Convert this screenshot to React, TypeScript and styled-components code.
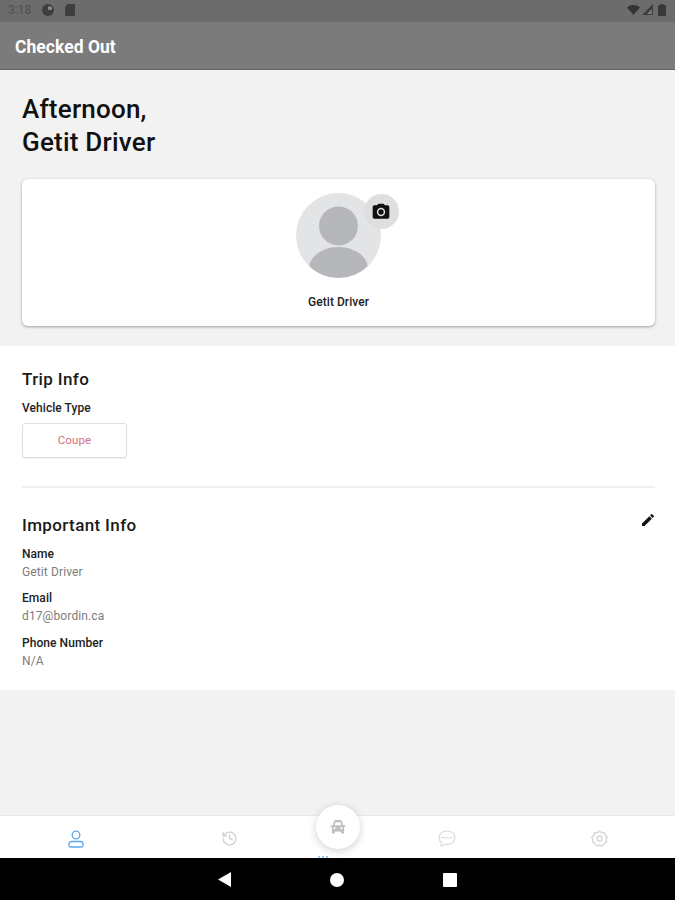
import React from "react";
import styled, { createGlobalStyle } from "styled-components";

const Global = createGlobalStyle`
  html, body { margin: 0; padding: 0; background: #f2f2f2; }
  body { font-family: Roboto, "Liberation Sans", sans-serif; }
`;

const Screen = styled.div`
  position: relative;
  width: 675px;
  height: 900px;
  display: flex;
  flex-direction: column;
  overflow: hidden;
  background: #f2f2f2;
`;

const StatusBar = styled.div`
  height: 22px;
  background: #6c6c6c;
  display: flex;
  align-items: center;
  padding: 0 9px 3px 8px;
  box-sizing: border-box;
  gap: 9px;
`;

const StatusTime = styled.span`
  font-size: 12px;
  color: #4e4e4e;
  width: 24px;
`;

const StatusRight = styled.div`
  margin-left: auto;
  display: flex;
  align-items: center;
  gap: 2px;
`;

const AppBar = styled.header`
  height: 48px;
  background: #7b7b7b;
  border-bottom: 1px solid #626262;
  display: flex;
  align-items: center;
  padding: 3px 15px 0;
  box-sizing: border-box;
  color: #fff;
  font-size: 17.5px;
  font-weight: 700;
  letter-spacing: 0.03px;
  flex: none;
`;

const Hero = styled.section`
  height: 276px;
  flex: none;
  padding: 23px 20px 0 22px;
  box-sizing: border-box;
`;

const Greeting = styled.h1`
  margin: 0;
  font-size: 26px;
  line-height: 33px;
  font-weight: 500;
  letter-spacing: 0.22px;
  color: #111;
`;

const ProfileCard = styled.div`
  margin-top: 20px;
  height: 147px;
  background: #fff;
  border-radius: 6px;
  box-shadow: 0 1px 3px rgba(0, 0, 0, 0.35);
  display: flex;
  flex-direction: column;
  align-items: center;
  padding-top: 14px;
  box-sizing: border-box;
`;

const AvatarWrap = styled.div`
  position: relative;
  width: 85px;
  height: 85px;
  margin-left: -1px;
`;

const CameraBadge = styled.div`
  position: absolute;
  left: 68px;
  top: 1px;
  width: 35px;
  height: 35px;
  border-radius: 50%;
  background: #dedfe0;
  display: flex;
  align-items: center;
  justify-content: center;
`;

const ProfileName = styled.div`
  margin-top: 17px;
  font-size: 12px;
  font-weight: 500;
  letter-spacing: 0.05px;
  color: #222;
`;

const InfoPanel = styled.section`
  height: 344px;
  flex: none;
  background: #fff;
  padding: 23px 20px 0 22px;
  box-sizing: border-box;
`;

const SectionHead = styled.div`
  display: flex;
  justify-content: space-between;
  align-items: flex-start;
`;

const SectionTitle = styled.h2`
  margin: 0;
  font-size: 17px;
  line-height: 20px;
  font-weight: 500;
  letter-spacing: 0.37px;
  color: #1a1a1a;
`;

const FieldLabel = styled.div`
  font-size: 12px;
  line-height: 15px;
  font-weight: 500;
  letter-spacing: 0.06px;
  color: #222;
`;

const FieldValue = styled.div`
  font-size: 12px;
  line-height: 15px;
  letter-spacing: 0.12px;
  color: #7d7d7d;
  margin-top: 3px;
`;

const TripLabel = styled(FieldLabel)`
  margin-top: 12px;
`;

const TypeChip = styled.div`
  margin-top: 7px;
  width: 105px;
  height: 35px;
  background: #fff;
  border: 1px solid #dedede;
  border-radius: 3px;
  box-shadow: 0 1px 1px rgba(0, 0, 0, 0.06);
  box-sizing: border-box;
  display: flex;
  align-items: center;
  justify-content: center;
  padding-bottom: 2px;
  font-size: 11.5px;
  letter-spacing: 0.1px;
  color: #d4707f;
`;

const Divider = styled.hr`
  margin: 28px 0 0;
  border: 0;
  border-top: 2px solid #f0f0f0;
`;

const ImportantHead = styled(SectionHead)`
  margin-top: 27px;
`;

const EditIcon = styled.svg`
  margin: -3px -1px 0 0;
`;

const Field = styled.div`
  margin-top: 11.5px;
`;

const Spacer = styled.div`
  flex: 1;
`;

const BottomNav = styled.nav`
  height: 43px;
  flex: none;
  background: #fff;
  border-top: 1px solid #e8e8e8;
  box-sizing: border-box;
  display: grid;
  grid-template-columns: 152px 154px 65px 152px 152px;
`;

const NavCell = styled.div`
  display: flex;
  align-items: center;
  justify-content: center;
  padding-top: 3px;
`;

const FloatingButton = styled.div`
  position: absolute;
  left: 316px;
  top: 805px;
  width: 44px;
  height: 44px;
  border-radius: 50%;
  background: #fff;
  box-shadow: 0 2px 8px rgba(0, 0, 0, 0.18);
  display: flex;
  align-items: center;
  justify-content: center;
`;

const ActiveDots = styled.div`
  position: absolute;
  left: 318px;
  top: 856px;
  width: 10px;
  height: 2px;
  background: repeating-linear-gradient(90deg, #9cc8ef 0 2px, transparent 2px 4px);
`;

const SystemBar = styled.div`
  height: 42px;
  flex: none;
  background: #000;
  display: flex;
  justify-content: center;
  align-items: center;
  gap: 99px;
  padding: 1px 1px 0 0;
  box-sizing: border-box;
`;

export default function App() {
  return (
    <Screen>
      <Global />
      <StatusBar>
        <StatusTime>3:18</StatusTime>
        <svg width="14" height="14" viewBox="0 0 14 14">
          <circle cx="7" cy="7" r="6" fill="#3e3e3e" />
          <path d="M7 3.500h2.500a1.700 1.700 0 0 1 0 3.600H7z" fill="#8a8a8a" />
        </svg>
        <svg width="12" height="13" viewBox="0 0 12 13">
          <path d="M3.500 1H10a1 1 0 0 1 1 1v10a1 1 0 0 1-1 1H2a1 1 0 0 1-1-1V4z" fill="#3e3e3e" />
        </svg>
        <StatusRight>
          <svg width="13" height="10" viewBox="0 0 13 10">
            <path d="M0 2.500C3.500-.8 9.500-.8 13 2.500L6.500 10z" fill="#333" />
          </svg>
          <svg width="11" height="11" viewBox="0 0 11 11">
            <path d="M11 0v11H0z" fill="#3c3c3c" />
            <path d="M10 5v5H5z" fill="#7c7c7c" />
          </svg>
          <svg width="8" height="12" viewBox="0 0 8 12" style={{ marginLeft: 3 }}>
            <path d="M2.500 0h3v1H7a1 1 0 0 1 1 1v9a1 1 0 0 1-1 1H1a1 1 0 0 1-1-1V2a1 1 0 0 1 1-1h1.500z" fill="#383838" />
          </svg>
        </StatusRight>
      </StatusBar>
      <AppBar>Checked Out</AppBar>
      <Hero>
        <Greeting>
          Afternoon,
          <br />
          Getit Driver
        </Greeting>
        <ProfileCard>
          <AvatarWrap>
            <svg width="85" height="85" viewBox="0 0 85 85">
              <defs>
                <clipPath id="avatar-clip">
                  <circle cx="42.500" cy="42.500" r="42.500" />
                </clipPath>
              </defs>
              <circle cx="42.500" cy="42.500" r="42.500" fill="#e3e4e6" />
              <g clipPath="url(#avatar-clip)" fill="#b6b7ba">
                <circle cx="42.500" cy="33" r="19.500" />
                <path d="M13 85 V76 C13 63 27 54 42.500 54 C58 54 72 63 72 76 V85 Z" />
              </g>
            </svg>
            <CameraBadge>
              <svg width="20" height="20" viewBox="0 0 24 24" fill="#111">
                <path d="M9 2 7.170 4H4a2 2 0 0 0-2 2v12a2 2 0 0 0 2 2h16a2 2 0 0 0 2-2V6a2 2 0 0 0-2-2h-3.170L15 2H9zm3 15a5 5 0 1 1 0-10 5 5 0 0 1 0 10z" />
                <circle cx="12" cy="12" r="3.200" />
              </svg>
            </CameraBadge>
          </AvatarWrap>
          <ProfileName>Getit Driver</ProfileName>
        </ProfileCard>
      </Hero>
      <InfoPanel>
        <SectionTitle>Trip Info</SectionTitle>
        <TripLabel>Vehicle Type</TripLabel>
        <TypeChip>Coupe</TypeChip>
        <Divider />
        <ImportantHead>
          <SectionTitle>Important Info</SectionTitle>
          <EditIcon width="16" height="16" viewBox="0 0 24 24" fill="#111">
            <path d="M3 17.250V21h3.750L17.810 9.940l-3.750-3.750L3 17.250zM20.710 7.040a1 1 0 0 0 0-1.410l-2.340-2.340a1 1 0 0 0-1.410 0l-1.830 1.830 3.750 3.750 1.830-1.830z" />
          </EditIcon>
        </ImportantHead>
        <Field>
          <FieldLabel>Name</FieldLabel>
          <FieldValue>Getit Driver</FieldValue>
        </Field>
        <Field>
          <FieldLabel>Email</FieldLabel>
          <FieldValue>d17@bordin.ca</FieldValue>
        </Field>
        <Field>
          <FieldLabel>Phone Number</FieldLabel>
          <FieldValue>N/A</FieldValue>
        </Field>
      </InfoPanel>
      <Spacer />
      <BottomNav>
        <NavCell>
          <svg width="16" height="18" viewBox="0 0 16 18" fill="none" stroke="#5ba8ef" strokeWidth="1.300">
            <circle cx="8" cy="5" r="3.800" />
            <path d="M1 15.500v-1.500a2.500 2.500 0 0 1 2.500-2.500h9a2.500 2.500 0 0 1 2.500 2.500v1.500a1.500 1.500 0 0 1-1.500 1.500h-11a1.500 1.500 0 0 1-1.500-1.500z" />
          </svg>
        </NavCell>
        <NavCell>
          <svg width="17" height="17" viewBox="0 0 24 24" fill="none" stroke="#d2d2d2" strokeWidth="2" strokeLinecap="round" strokeLinejoin="round">
            <path d="M3 12a9 9 0 1 0 3-6.700L3 8" />
            <path d="M3 3v5h5" />
            <path d="M12 7v5l4 2" />
          </svg>
        </NavCell>
        <div />
        <NavCell>
          <svg width="18" height="17" viewBox="0 0 18 17" fill="none" stroke="#dadada" strokeWidth="1.100" strokeLinecap="round">
            <path d="M9 1c4.400 0 8 2.900 8 6.800s-3.600 6.800-8 6.800c-.8 0-1.500-.1-2.200-.3L3 16l.7-3.300C2 11.500 1 9.800 1 7.800 1 3.900 4.600 1 9 1z" />
            <path d="M3 7.800h12" />
          </svg>
        </NavCell>
        <NavCell>
          <svg width="17" height="17" viewBox="0 0 24 24" fill="none" stroke="#d6d6d6" strokeWidth="2" strokeLinecap="round" strokeLinejoin="round">
            <path d="M12 1.500 15 4l4-.3.900 3.900L23 10l-1.500 3.500L22 17l-3.500 2L16 22.500 12 21.500 8 22.500 5.500 19 2 17l.5-3.500L1 10l3.100-2.400L5 3.700 9 4z" />
            <circle cx="12" cy="12" r="3.500" />
          </svg>
        </NavCell>
      </BottomNav>
      <SystemBar>
        <svg width="13" height="15" viewBox="0 0 13 15">
          <path d="M13 0v15L0 7.500z" fill="#fff" />
        </svg>
        <svg width="14" height="14" viewBox="0 0 14 14">
          <circle cx="7" cy="7" r="7" fill="#fff" />
        </svg>
        <svg width="14" height="14" viewBox="0 0 14 14">
          <rect width="14" height="14" rx="1" fill="#fff" />
        </svg>
      </SystemBar>
      <FloatingButton>
        <svg width="16" height="14" viewBox="0 0 18 16" fill="#c0c0c0">
          <path d="M4.500 1.500C4.800.6 5.600 0 6.500 0h5c.9 0 1.700.6 2 1.500L15 6h1.500a1 1 0 0 1 0 2H16v6.500a1 1 0 0 1-1 1h-1.500a1 1 0 0 1-1-1V13h-7v1.500a1 1 0 0 1-1 1H3a1 1 0 0 1-1-1V8h-.5a1 1 0 0 1 0-2H3zM5.200 6h7.600l-1-3.500H6.200zM5 10.500a1.200 1.200 0 1 0 0-2.400 1.200 1.200 0 0 0 0 2.400zm8 0a1.200 1.200 0 1 0 0-2.400 1.200 1.200 0 0 0 0 2.400z" fillRule="evenodd" />
        </svg>
      </FloatingButton>
      <ActiveDots />
    </Screen>
  );
}
